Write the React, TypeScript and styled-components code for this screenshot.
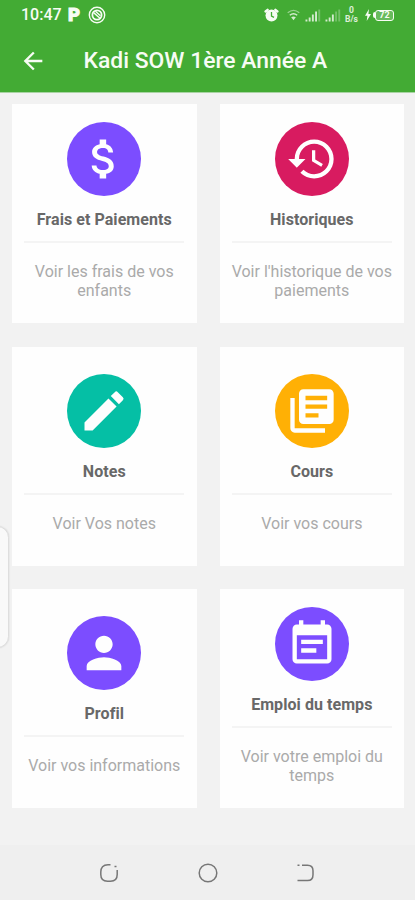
import React from "react";
import styled, { createGlobalStyle } from "styled-components";
import type { IconType } from "react-icons";
import {
  MdArrowBack,
  MdAttachMoney,
  MdEdit,
  MdEventNote,
  MdHistory,
  MdLibraryBooks,
  MdPerson,
} from "react-icons/md";

const GlobalStyle = createGlobalStyle`
  * { box-sizing: border-box; }
  body {
    margin: 0;
    background: #f2f2f2;
    font-family: Roboto, "Liberation Sans", sans-serif;
  }
`;

const Screen = styled.div`
  position: relative;
  display: flex;
  flex-direction: column;
  width: 415px;
  height: 900px;
  overflow: hidden;
  background: #f2f2f2;
`;

const Header = styled.header`
  flex: none;
  height: 93px;
  background: #43ab34;
  border-bottom: 1px solid #a9d3a3;
  color: #f7fcf4;
`;

const StatusBar = styled.div`
  display: flex;
  align-items: center;
  justify-content: space-between;
  height: 30px;
  padding: 0 21px 0 21px;
`;

const StatusGroup = styled.div`
  display: flex;
  align-items: center;
`;

const Clock = styled.span`
  width: 47px;
  font-size: 16px;
  font-weight: 500;
  line-height: 30px;
`;

const ParkingMark = styled.span`
  width: 20px;
  font-size: 18.5px;
  font-weight: 900;
  line-height: 28px;
  -webkit-text-stroke: 1px currentColor;
`;

const StatusIcon = styled.svg<{ $gap?: number; $dim?: boolean }>`
  flex: none;
  margin-right: ${(p) => p.$gap ?? 0}px;
  opacity: ${(p) => (p.$dim ? 0.8 : 1)};
`;

const Speed = styled.span`
  display: flex;
  flex-direction: column;
  align-items: center;
  width: 15px;
  margin-right: 6px;
  font-size: 8.5px;
  font-weight: 700;
  line-height: 9px;
  opacity: 0.85;
`;

const Battery = styled.span`
  display: flex;
  align-items: center;
  justify-content: center;
  width: 19px;
  height: 11px;
  border: 1.5px solid currentColor;
  border-radius: 3px;
  background: rgba(255, 255, 255, 0.2);
  font-size: 9px;
  font-weight: 700;
  line-height: 9px;
`;

const BatteryTip = styled.span`
  width: 2px;
  height: 6px;
  border-radius: 2px 0 0 2px;
  background: currentColor;
`;

const TitleBar = styled.div`
  display: flex;
  align-items: center;
  height: 62px;
  padding-left: 19px;
`;

const BackButton = styled.button`
  display: flex;
  width: 64.5px;
  padding: 0;
  border: 0;
  background: none;
  color: inherit;
  font-size: 28px;
`;

const Title = styled.h1`
  margin: 0;
  font-size: 22.9px;
  font-weight: 500;
  line-height: 30px;
  white-space: nowrap;
`;

const Grid = styled.main`
  flex: none;
  display: grid;
  grid-template-columns: 184.5px 184px;
  grid-auto-rows: 219.3px;
  column-gap: 23.3px;
  row-gap: 23.3px;
  height: 752px;
  padding: 11px 0 0 12px;
`;

const Card = styled.section`
  display: flex;
  flex-direction: column;
  align-items: center;
  justify-content: center;
  padding: 0 12px 0.4px;
  background: #fefefe;
`;

const Disc = styled.div<{ $color: string }>`
  display: flex;
  flex: none;
  align-items: center;
  justify-content: center;
  width: 74px;
  height: 74px;
  border-radius: 50%;
  background: ${(p) => p.$color};
  color: #fefefe;
  font-size: 52px;
`;

const CardTitle = styled.h2`
  margin: 14px 0 12px;
  color: #686868;
  font-size: 16px;
  font-weight: 700;
  line-height: 19px;
  letter-spacing: 0.06px;
  white-space: nowrap;
`;

const Divider = styled.hr`
  flex: none;
  width: 160px;
  height: 2px;
  margin: 0;
  border: 0;
  background: #f4f4f4;
`;

const Description = styled.p`
  margin: 19px -10px 5.5px;
  color: #aaaaaa;
  font-size: 16px;
  line-height: 19px;
  text-align: center;
  white-space: pre-line;
`;

const EdgeHandle = styled.div`
  position: absolute;
  top: 526px;
  left: -14px;
  width: 23px;
  height: 122px;
  border: 1px solid #dedede;
  border-radius: 12px;
  background: #f9f9f9;
  box-shadow: 0 0 2px rgba(0, 0, 0, 0.12);
`;

const NavBar = styled.nav`
  display: flex;
  flex: 1;
  align-items: center;
  justify-content: space-between;
  padding: 1px 98px 0 98px;
  background: #efefef;
`;

const NavIcon = styled.svg`
  width: 22px;
  height: 22px;
  fill: none;
  stroke: #777777;
  stroke-width: 1.5;
`;

type Entry = {
  title: string;
  description: string;
  color: string;
  Icon: IconType;
};

const entries: Entry[] = [
  { title: "Frais et Paiements", description: "Voir les frais de vos\nenfants", color: "#7c4dff", Icon: MdAttachMoney },
  { title: "Historiques", description: "Voir l'historique de vos\npaiements", color: "#d81b60", Icon: MdHistory },
  { title: "Notes", description: "Voir Vos notes", color: "#05bfa5", Icon: MdEdit },
  { title: "Cours", description: "Voir vos cours", color: "#ffb005", Icon: MdLibraryBooks },
  { title: "Profil", description: "Voir vos informations", color: "#7c4dff", Icon: MdPerson },
  { title: "Emploi du temps", description: "Voir votre emploi du\ntemps", color: "#7c4dff", Icon: MdEventNote },
];

const AlarmIcon = () => (
  <StatusIcon $gap={8} width="15" height="14" viewBox="0 0 15 14">
    <circle cx="7.5" cy="7.5" r="6" fill="currentColor" />
    <path d="M1.6 3.5 3.6 1.8M13.4 3.5 11.4 1.8" stroke="currentColor" strokeWidth="2.4" strokeLinecap="round" />
    <path d="M7.5 4v4l2.5 1.3" fill="none" stroke="#43ab34" strokeWidth="1.3" />
  </StatusIcon>
);

const WifiIcon = () => (
  <StatusIcon $gap={5} $dim width="13" height="12" viewBox="0 0 13 12">
    <path d="M.7 3.8Q6.5-1.2 12.3 3.8" fill="none" stroke="currentColor" strokeWidth="1.2" opacity=".6" />
    <path d="M2.8 6.3Q6.5 3.2 10.2 6.3" fill="none" stroke="currentColor" strokeWidth="1.5" />
    <path d="M4.2 8.3Q6.5 6.6 8.8 8.3L6.5 11.2Z" fill="currentColor" />
  </StatusIcon>
);

const SignalIcon = ({ bars, gap }: { bars: number; gap: number }) => (
  <StatusIcon $gap={gap} $dim width="16" height="13" viewBox="0 0 16 13">
    {[2, 4, 7, 10, 12].map((h, i) => (
      <rect key={h} x={0.5 + i * 3.2} y={12.5 - h} width="1.9" height={h} fill="currentColor" opacity={i < bars ? 1 : 0.35} />
    ))}
  </StatusIcon>
);

const App = () => (
  <>
    <GlobalStyle />
    <Screen>
      <Header>
        <StatusBar>
          <StatusGroup>
            <Clock>10:47</Clock>
            <ParkingMark>P</ParkingMark>
            <StatusIcon width="18" height="18" viewBox="0 0 18 18" fill="none" stroke="currentColor">
              <circle cx="9" cy="9" r="7.7" strokeWidth="1.4" />
              <circle cx="9" cy="9" r="4.6" strokeWidth="1.8" />
              <path d="M5.6 6.6 12 12.2M7.4 5.3l5 4.5" strokeWidth="1.4" />
            </StatusIcon>
          </StatusGroup>
          <StatusGroup>
            <AlarmIcon />
            <WifiIcon />
            <SignalIcon bars={4} gap={4} />
            <SignalIcon bars={3} gap={3} />
            <Speed>
              <span>0</span>
              <span>B/s</span>
            </Speed>
            <StatusIcon $gap={2} width="6" height="12" viewBox="0 0 6 12">
              <path d="M4 0 0 6.7h2.4L1.7 12 6 5H3.4Z" fill="currentColor" />
            </StatusIcon>
            <BatteryTip />
            <Battery>72</Battery>
          </StatusGroup>
        </StatusBar>
        <TitleBar>
          <BackButton aria-label="Retour">
            <MdArrowBack />
          </BackButton>
          <Title>Kadi SOW 1ère Année A</Title>
        </TitleBar>
      </Header>
      <Grid>
        {entries.map(({ title, description, color, Icon }) => (
          <Card key={title}>
            <Disc $color={color}>
              <Icon />
            </Disc>
            <CardTitle>{title}</CardTitle>
            <Divider />
            <Description>{description}</Description>
          </Card>
        ))}
      </Grid>
      <EdgeHandle />
      <NavBar>
        <NavIcon viewBox="0 0 22 22">
          <path d="M12.5 2.8H10C5 2.8 2.8 5.5 2.8 10v2.5c0 4.2 2.2 6.7 6.7 6.7h3c4.2 0 6.7-2.2 6.7-6.7V8M16.5 4.5h2" />
        </NavIcon>
        <NavIcon viewBox="0 0 22 22">
          <circle cx="11" cy="11" r="8.8" />
        </NavIcon>
        <NavIcon viewBox="0 0 22 22">
          <path d="M2.5 3.3h2M7 3.3h5.5c3.5 0 5.5 2 5.5 5.5v4c0 3.5-2 5.8-5.5 5.8h-10" />
        </NavIcon>
      </NavBar>
    </Screen>
  </>
);

export default App;
